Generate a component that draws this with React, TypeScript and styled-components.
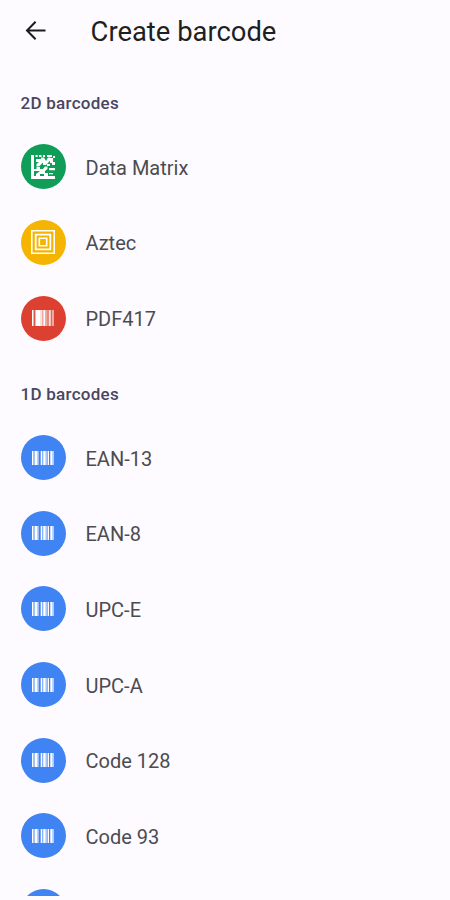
import React from "react";
import styled, { createGlobalStyle } from "styled-components";

const GlobalStyle = createGlobalStyle`
  * { box-sizing: border-box; }
  body { margin: 0; background: #fdfbff; }
`;

const Screen = styled.main`
  height: 900px;
  overflow: hidden;
  background: #fdfbff;
  font-family: Roboto, "Liberation Sans", sans-serif;
`;

const Viewport = styled.div`
  height: 895.5px;
  overflow: hidden;
`;

const TopBar = styled.header`
  display: flex;
  align-items: center;
  height: 65px;
  padding: 0 0 4px 24px;
`;

const BackButton = styled.button`
  display: flex;
  width: 24px;
  height: 24px;
  margin: 0 42.6px 0 0;
  padding: 0;
  border: 0;
  background: none;
  color: #1b1b1f;
`;

const Title = styled.h1`
  margin: 0;
  padding-top: 2px;
  color: #1f1f23;
  font-size: 27.4px;
  font-weight: 400;
  line-height: 36px;
`;

const SectionTitle = styled.h2`
  display: flex;
  align-items: center;
  height: 63.8px;
  margin: 0;
  padding: 13px 0 0 20.5px;
  color: #49465f;
  font-size: 17px;
  font-weight: 500;
  letter-spacing: 0.27px;
`;

const List = styled.ul`
  margin: 0;
  padding: 0;
  list-style: none;
`;

const Row = styled.li`
  display: flex;
  align-items: center;
  gap: 20px;
  height: 75.7px;
  padding-left: 20.5px;
`;

const Badge = styled.span<{ $color: string }>`
  display: flex;
  flex: none;
  align-items: center;
  justify-content: center;
  width: 45px;
  height: 45px;
  border-radius: 50%;
  background: ${(p) => p.$color};
`;

const Label = styled.span`
  padding-top: 2px;
  color: #4c4c50;
  font-size: 20px;
  line-height: 28px;
`;

const BackArrow = () => (
  <svg width="24" height="24" viewBox="0 0 24 24" fill="none" stroke="currentColor" strokeWidth="2">
    <path d="M21.5 11.5H3.5M11.6 2.7L3 11.5L11.6 20.3" />
  </svg>
);

const MatrixIcon = () => (
  <svg width="24" height="24" viewBox="0 0 24 24" fill="#fff">
    <path d="M0 0h3v21H24v3H0zM4.5 0h2.2v2H4.5zM8 0h2.5v2H8zM12 0h2v2h-2zM16 0h5v2h-5zM22 1h2v2h-2zM5 4h5V2.5h3L15 6l2-3.5h2.5V5L17 8l-2 2h-3V7.5L8 11.5H5.5V9L8 7H5zM19 3h3v4h2v3h-3V8h-2zM16 9h3v2h-3zM2 14h3.5v-2H9v2h3l2-2.5h2.5V14L14 16v2h3v3h-4v-2H9v2H5v-2l4-3H2zM18 13h6v2.2h-6zM18 18h4v1.3h-4z" />
  </svg>
);

const AztecIcon = () => (
  <svg width="24" height="24" viewBox="0 0 24 24" fill="none" stroke="#fff">
    <path strokeWidth="1.6" d="M.8.8h22.4v22.4H.8z" />
    <path strokeWidth="1.8" d="M4.7 4.7h14.6v14.6H4.7z" />
    <path strokeWidth="1.6" d="M8.3 8.3h7.4v7.4H8.3z" />
  </svg>
);

const StackedIcon = () => (
  <svg width="22" height="16" viewBox="0 0 22 16" fill="#fff">
    <path opacity=".55" d="M0 0h22v16H0z" />
    <path d="M0 0h1.4v16H0zM3.5 0h5v16h-5zM11.5 0h1.5v16h-1.5z" />
    <path opacity=".65" d="M8.5 0h1.5v16H8.5zM17 0h1.5v16H17z" />
    <path fill="#db4030" opacity=".75" d="M1.7 0h1.6v16H1.7zM15.6 0h.8v16h-.8zM19.2 0h.8v16h-.8z" />
  </svg>
);

const LinearIcon = () => (
  <svg width="22" height="14" viewBox="0 0 22 14" fill="#fff">
    <path d="M0 0h1.5v14H0zM2.5 0h3v14h-3zM8.7 0h1.7v14H8.7zM11.2 0h2.5v14h-2.5zM15.6 0h1.4v14h-1.4zM18.3 0h2.2v14h-2.2z" />
    <path opacity=".6" d="M5.5 0h1.3v14H5.5zM13.7 0h1.2v14h-1.2zM20.5 0H22v14h-1.5z" />
  </svg>
);

interface BarcodeFormat {
  name?: string;
  color: string;
  Icon: React.ComponentType;
}

const matrixCodes: BarcodeFormat[] = [
  { name: "Data Matrix", color: "#109d58", Icon: MatrixIcon },
  { name: "Aztec", color: "#f4b400", Icon: AztecIcon },
  { name: "PDF417", color: "#db4030", Icon: StackedIcon },
];

const linearCodes: BarcodeFormat[] = [
  "EAN-13",
  "EAN-8",
  "UPC-E",
  "UPC-A",
  "Code 128",
  "Code 93",
  undefined,
].map((name) => ({ name, color: "#4083f2", Icon: LinearIcon }));

const BarcodeList = ({ items }: { items: BarcodeFormat[] }) => (
  <List>
    {items.map(({ name, color, Icon }, index) => (
      <Row key={index}>
        <Badge $color={color}><Icon /></Badge>
        {name && <Label>{name}</Label>}
      </Row>
    ))}
  </List>
);

export default function App() {
  return (
    <Screen>
      <GlobalStyle />
      <Viewport>
        <TopBar>
          <BackButton aria-label="Back"><BackArrow /></BackButton>
          <Title>Create barcode</Title>
        </TopBar>
        <SectionTitle>2D barcodes</SectionTitle>
        <BarcodeList items={matrixCodes} />
        <SectionTitle>1D barcodes</SectionTitle>
        <BarcodeList items={linearCodes} />
      </Viewport>
    </Screen>
  );
}
